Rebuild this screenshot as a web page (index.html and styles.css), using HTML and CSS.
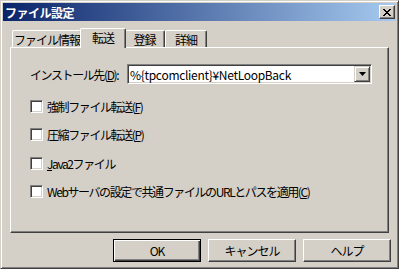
FILE: index.html
```html
<!DOCTYPE html>
<html lang="ja">
<head>
  <meta charset="UTF-8">
  <title>ファイル設定</title>
  <link rel="stylesheet" href="styles.css">
</head>
<body>
  <div class="window">
    <div class="titlebar">
      <span class="title">ファイル設定</span>
      <span class="close">
        <svg width="8" height="7" viewBox="0 0 8 7">
          <path d="M0 0h2v1h-2zM6 0h2v1h-2zM1 1h2v1h-2zM5 1h2v1h-2zM2 2h4v1h-4zM3 3h2v1h-2zM2 4h4v1h-4zM1 5h2v1h-2zM5 5h2v1h-2zM0 6h2v1h-2zM6 6h2v1h-2z" fill="#000"/>
        </svg>
      </span>
    </div>

    <div class="dialog">
      <div class="tabs">
        <div class="tab t1">ファイル情報</div>
        <div class="tab t2 active">転送</div>
        <div class="tab t3">登録</div>
        <div class="tab t4">詳細</div>
      </div>

      <div class="panel">
        <div class="row-combo">
          <label class="combo-label">インストール先(<u>D</u>):</label>
          <div class="combo">
            <span class="combo-text">%{tpcomclient}¥NetLoopBack</span>
            <span class="drop">
              <svg width="7" height="4" viewBox="0 0 7 4"><path d="M0 0h7l-3.5 4z" fill="#000"/></svg>
            </span>
          </div>
        </div>

        <div class="check-row"><span class="box"></span><span>強制ファイル転送(<u>F</u>)</span></div>
        <div class="check-row"><span class="box"></span><span>圧縮ファイル転送(<u>P</u>)</span></div>
        <div class="check-row"><span class="box"></span><span><u>J</u>ava2ファイル</span></div>
        <div class="check-row"><span class="box"></span><span>Webサーバの設定で共通ファイルのURLとパスを適用(<u>C</u>)</span></div>
      </div>

      <div class="buttons">
        <button class="btn default">OK</button>
        <button class="btn">キャンセル</button>
        <button class="btn">ヘルプ</button>
      </div>
    </div>
  </div>
</body>
</html>
```

FILE: styles.css
```css
body {
  margin: 0;
  background-color: #d4d0c8;
  font-family: "Noto Sans CJK JP", "Liberation Sans", sans-serif;
  font-size: 12px;
  color: #000;
}

.window {
  width: 399px;
  height: 269px;
  box-sizing: border-box;
  background-color: #d4d0c8;
  border: 1px solid;
  border-color: #d4d0c8 #404040 #404040 #d4d0c8;
  box-shadow: inset 1px 1px #fff, inset -1px -1px #808080;
  padding: 2px;
}

.titlebar {
  height: 18px;
  display: flex;
  align-items: center;
  justify-content: space-between;
  padding: 0 1px 0 2px;
  background: linear-gradient(to right, #0a246a, #a6caf0);
}

.title {
  color: #fff;
  font-weight: bold;
  font-size: 12px;
  letter-spacing: -0.5px;
}

.close {
  width: 16px;
  height: 14px;
  box-sizing: border-box;
  display: flex;
  align-items: center;
  justify-content: center;
  background-color: #d4d0c8;
  border: 1px solid;
  border-color: #fff #404040 #404040 #fff;
  box-shadow: inset -1px -1px #808080;
}

.dialog {
  padding: 7px 5px 0 7px;
}

.tabs {
  display: flex;
  align-items: flex-end;
  height: 19px;
  padding-left: 2px;
}

.tab {
  height: 17px;
  box-sizing: border-box;
  border: 1px solid #fff;
  border-bottom: none;
  border-right-color: #404040;
  border-radius: 2px 2px 0 0;
  box-shadow: inset -1px 0 #808080;
  display: flex;
  align-items: center;
  justify-content: center;
  letter-spacing: -1px;
}

.t1 { width: 70px; }
.t2 { width: 42px; }
.t3 { width: 41px; }
.t4 { width: 42px; }

.tab.active {
  width: 46px;
  height: 20px;
  margin: 0 -2px -1px;
  background-color: #d4d0c8;
  position: relative;
  z-index: 1;
  padding-bottom: 2px;
}

.panel {
  width: 379px;
  height: 186px;
  box-sizing: border-box;
  border: 1px solid;
  border-color: #fff #404040 #404040 #fff;
  box-shadow: inset -1px -1px #808080;
  padding: 16px 0 0 19px;
}

.row-combo {
  display: flex;
  align-items: center;
  height: 20px;
  margin-bottom: 8px;
}

.combo-label {
  width: 97px;
  letter-spacing: -1.4px;
}

.combo {
  width: 245px;
  height: 20px;
  box-sizing: border-box;
  background-color: #fff;
  border: 1px solid;
  border-color: #808080 #fff #fff #808080;
  box-shadow: inset 1px 1px #404040, inset -1px -1px #d4d0c8;
  display: flex;
  align-items: center;
  justify-content: space-between;
  padding: 1px 1px 1px 2px;
}

.combo-text {
  letter-spacing: -0.3px;
}

.drop {
  width: 16px;
  height: 16px;
  box-sizing: border-box;
  display: flex;
  align-items: center;
  justify-content: center;
  background-color: #d4d0c8;
  border: 1px solid;
  border-color: #d4d0c8 #404040 #404040 #d4d0c8;
  box-shadow: inset 1px 1px #fff, inset -1px -1px #808080;
}

.check-row {
  height: 28.5px;
  display: flex;
  align-items: center;
  gap: 4px;
  letter-spacing: -1.4px;
}

.box {
  width: 13px;
  height: 13px;
  box-sizing: border-box;
  background-color: #fff;
  border: 1px solid;
  border-color: #808080 #fff #fff #808080;
  box-shadow: inset 1px 1px #404040, inset -1px -1px #d4d0c8;
}

.buttons {
  display: flex;
  justify-content: flex-end;
  gap: 7px;
  margin-top: 6px;
}

.btn {
  width: 88px;
  height: 23px;
  font-family: inherit;
  font-size: 12px;
  letter-spacing: -1px;
  background-color: #d4d0c8;
  border: 1px solid;
  border-color: #fff #404040 #404040 #fff;
  box-shadow: inset -1px -1px #808080;
  padding: 0;
}

.btn.default {
  border: 1px solid #000;
  box-shadow: inset 1px 1px #fff, inset -1px -1px #404040, inset -2px -2px #808080;
}
```
